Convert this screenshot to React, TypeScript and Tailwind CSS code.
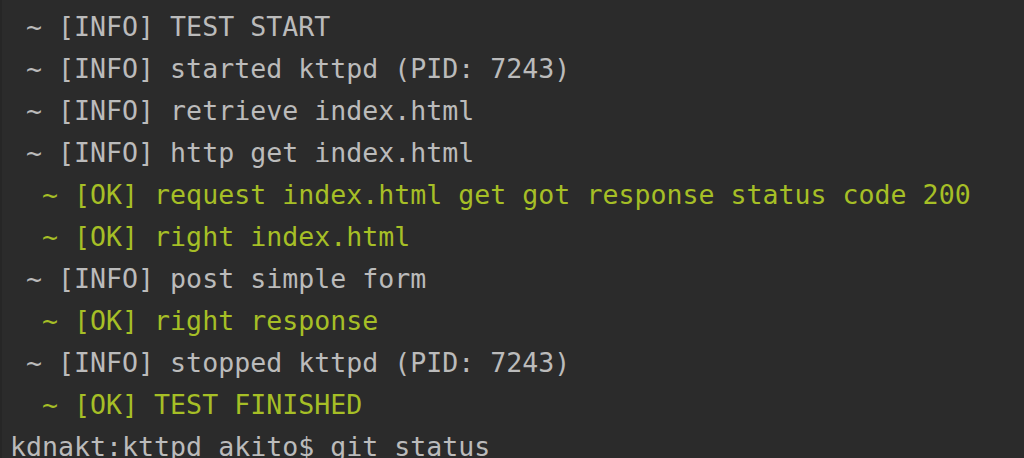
const lines: { text: string; ok?: boolean }[] = [
  { text: " ~ [INFO] TEST START" },
  { text: " ~ [INFO] started kttpd (PID: 7243)" },
  { text: " ~ [INFO] retrieve index.html" },
  { text: " ~ [INFO] http get index.html" },
  { text: "  ~ [OK] request index.html get got response status code 200", ok: true },
  { text: "  ~ [OK] right index.html", ok: true },
  { text: " ~ [INFO] post simple form" },
  { text: "  ~ [OK] right response", ok: true },
  { text: " ~ [INFO] stopped kttpd (PID: 7243)" },
  { text: "  ~ [OK] TEST FINISHED", ok: true },
  { text: "kdnakt:kttpd akito$ git status" },
];

export default function App() {
  return (
    <div className="h-[458px] w-[1024px] overflow-hidden border-l-2 border-[#262626] bg-[#2b2b2b] pl-[8px] pt-[6px] font-['DejaVu_Sans_Mono',monospace] text-[26.6px] leading-[42px]">
      {lines.map((line, i) => (
        <div
          key={i}
          className={line.ok ? "whitespace-pre text-[#a6bf26]" : "whitespace-pre text-[#bbbbbb]"}
        >
          {line.text}
        </div>
      ))}
    </div>
  );
}
